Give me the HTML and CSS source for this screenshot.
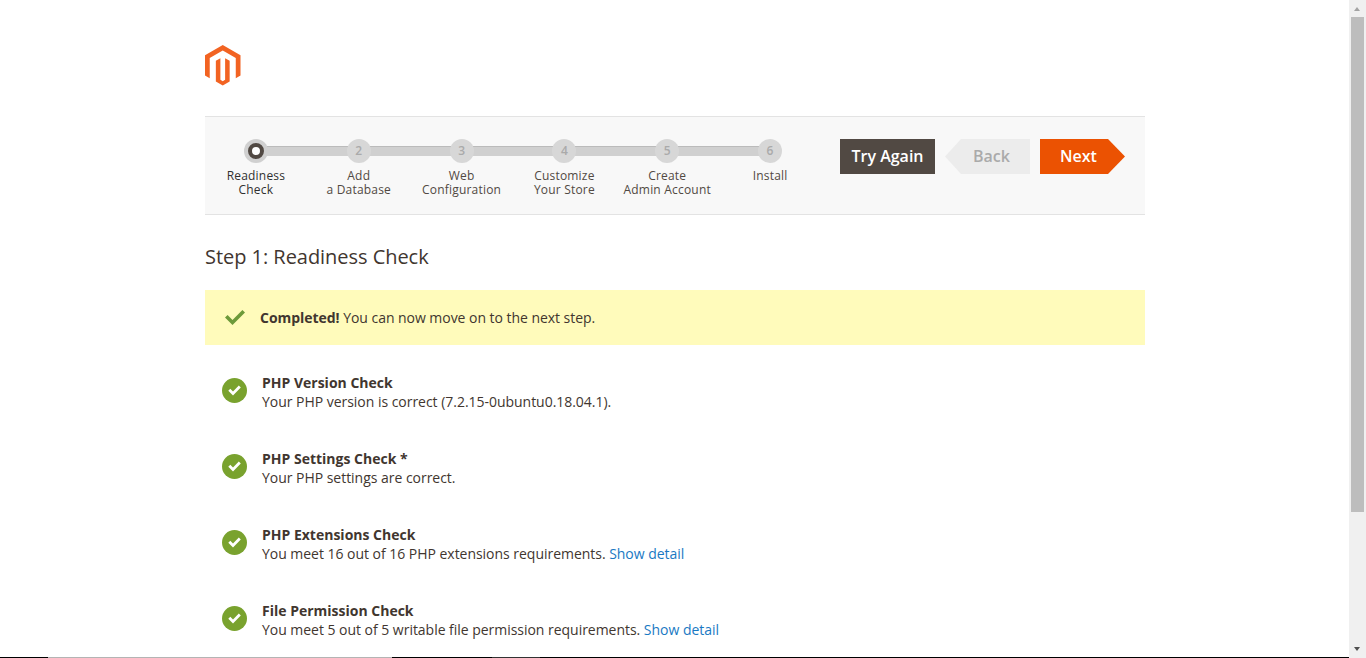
FILE: index.html
```html
<!DOCTYPE html>
<html lang="en">
<head>
<meta charset="utf-8">
<title>Magento Setup</title>
<link rel="stylesheet" href="styles.css">
</head>
<body>
<main class="page">
  <header class="logo-row">
    <svg class="logo" viewBox="0 0 36 41" preserveAspectRatio="none" aria-label="Magento"><path d="M18 0 36 10.3V30.8L31.2 33.6V13.2L18 5.6 4.8 13.2V33.6L0 30.8V10.3ZM20.4 13.4 25 16V37L18 41 11 37V16L15.6 13.4V35.3L18 36.7 20.4 35.3Z"/></svg>
  </header>
  <nav class="wizard">
    <ol class="steps">
      <li class="step step-active"><span class="dot"></span><span class="label">Readiness<br>Check</span></li>
      <li class="step"><span class="dot">2</span><span class="label">Add<br>a Database</span></li>
      <li class="step"><span class="dot">3</span><span class="label">Web<br>Configuration</span></li>
      <li class="step"><span class="dot">4</span><span class="label">Customize<br>Your Store</span></li>
      <li class="step"><span class="dot">5</span><span class="label">Create<br>Admin Account</span></li>
      <li class="step step-last"><span class="dot">6</span><span class="label">Install</span></li>
    </ol>
    <div class="actions">
      <button class="btn btn-dark">Try Again</button>
      <button class="btn btn-back">Back</button>
      <button class="btn btn-next">Next</button>
    </div>
  </nav>
  <h1 class="title">Step 1: Readiness Check</h1>
  <div class="notice">
    <svg class="notice-check" viewBox="0 0 20 15"><path d="M0 7.6 2.6 5 7.5 9.9 17.4 0 20 2.6 7.5 15Z"/></svg>
    <p><strong>Completed!</strong> You can now move on to the next step.</p>
  </div>
  <ul class="checks">
    <li class="check">
      <svg class="ok" viewBox="0 0 25 25"><circle cx="12.5" cy="12.5" r="12.5"/><path d="M6.3 12.7 8.3 10.7 11 13.4 16.8 7.6 18.8 9.6 11 17.4Z"/></svg>
      <div class="check-text"><h2>PHP Version Check</h2><p>Your PHP version is correct (7.2.15-0ubuntu0.18.04.1).</p></div>
    </li>
    <li class="check">
      <svg class="ok" viewBox="0 0 25 25"><circle cx="12.5" cy="12.5" r="12.5"/><path d="M6.3 12.7 8.3 10.7 11 13.4 16.8 7.6 18.8 9.6 11 17.4Z"/></svg>
      <div class="check-text"><h2>PHP Settings Check *</h2><p>Your PHP settings are correct.</p></div>
    </li>
    <li class="check">
      <svg class="ok" viewBox="0 0 25 25"><circle cx="12.5" cy="12.5" r="12.5"/><path d="M6.3 12.7 8.3 10.7 11 13.4 16.8 7.6 18.8 9.6 11 17.4Z"/></svg>
      <div class="check-text"><h2>PHP Extensions Check</h2><p>You meet 16 out of 16 PHP extensions requirements. <a href="#">Show detail</a></p></div>
    </li>
    <li class="check">
      <svg class="ok" viewBox="0 0 25 25"><circle cx="12.5" cy="12.5" r="12.5"/><path d="M6.3 12.7 8.3 10.7 11 13.4 16.8 7.6 18.8 9.6 11 17.4Z"/></svg>
      <div class="check-text"><h2>File Permission Check</h2><p>You meet 5 out of 5 writable file permission requirements. <a href="#">Show detail</a></p></div>
    </li>
  </ul>
</main>
<div class="scrollbar">
  <span class="arrow arrow-up"></span>
  <span class="thumb"></span>
  <span class="arrow arrow-down"></span>
</div>
<div class="edge">
  <span class="edge-a"></span><span class="edge-b"></span><span class="edge-c"></span><span class="edge-d"></span><span class="edge-e"></span>
</div>
</body>
</html>
```
FILE: styles.css
```css
*, *::before, *::after { box-sizing: border-box; }
html, body { height: 100%; }
body {
  margin: 0;
  overflow: hidden;
  background: #fff;
  color: #41362f;
  font: 14px/19px "Open Sans", "Liberation Sans", sans-serif;
}
.page { width: 940px; margin-left: 205px; }
.logo-row { height: 116px; padding-top: 45px; }
.logo { display: block; width: 35.5px; height: 40.5px; fill: #f26322; }

.wizard {
  height: 99px;
  display: flex;
  justify-content: space-between;
  background: #f8f8f8;
  border-top: 1px solid #e3e3e3;
  border-bottom: 1px solid #e3e3e3;
  padding: 22px 20px 0 0;
}
.steps {
  display: flex;
  list-style: none;
  margin: 0 0 0 -0.5px;
  padding: 0;
  width: 617px;
}
.step {
  position: relative;
  width: 103px;
  display: flex;
  flex-direction: column;
  align-items: center;
  text-align: center;
}
.step::before {
  content: "";
  position: absolute;
  top: 7px;
  left: 50%;
  width: 103px;
  height: 10px;
  background: #d0d0d0;
  border-top: 1px solid #bbb;
}
.step-last::before { display: none; }
.dot {
  position: relative;
  width: 24px;
  height: 24px;
  border-radius: 50%;
  background: #d7d7d7;
  color: #aaa;
  font-size: 12px;
  font-weight: 600;
  line-height: 24px;
}
.step-active .dot { background: #d0d0d0; }
.step-active .dot::after {
  content: "";
  position: absolute;
  left: 4px;
  top: 4px;
  width: 16px;
  height: 16px;
  border-radius: 50%;
  background: #fff;
  border: 4px solid #514943;
}
.label {
  margin-top: 6px;
  font-size: 12px;
  line-height: 14px;
  letter-spacing: 0.2px;
  white-space: nowrap;
  color: #514943;
}
.step-active .label { color: #303030; }

.actions { display: flex; gap: 10px; }
.btn {
  height: 35px;
  border: 0;
  padding: 0;
  font: 600 16px/35px "Open Sans", "Liberation Sans", sans-serif;
  color: #fff;
}
.btn-dark { width: 95px; background: #514943; }
.btn-back {
  width: 85px;
  background: #ececec;
  color: #aaa;
  padding-left: 8px;
  clip-path: polygon(16px 0, 100% 0, 100% 100%, 16px 100%, 0 50%);
}
.btn-next {
  width: 85px;
  background: #eb5202;
  padding-right: 8px;
  clip-path: polygon(0 0, 68px 0, 100% 50%, 68px 100%, 0 100%);
}

.title {
  margin: 28px 0 19px;
  font-size: 20px;
  font-weight: 400;
  line-height: 28px;
  letter-spacing: -0.04px;
}
.notice {
  height: 55px;
  display: flex;
  align-items: center;
  gap: 15px;
  padding-left: 20px;
  background: #fffbbb;
}
.notice p { margin: 0; letter-spacing: -0.04px; }
.notice-check { width: 20px; height: 15px; fill: #6d9a3a; }
.checks { list-style: none; margin: 24px 0 0; padding: 0; }
.check {
  display: flex;
  height: 76px;
  padding-left: 17px;
  gap: 15px;
}
.check-text { padding-top: 4px; }
.ok { flex: none; width: 25px; height: 25px; margin-top: 9px; }
.ok circle { fill: #79a22e; }
.ok path { fill: #fff; }
.check h2 { margin: 0; font-size: 14px; font-weight: 700; line-height: 19px; }
.check p { margin: 0; letter-spacing: -0.03px; }
.check a { color: #1979c3; text-decoration: none; }

.scrollbar {
  position: fixed;
  top: 0;
  right: 0;
  width: 17px;
  height: 658px;
  background: #f0f0f0;
}
.thumb {
  position: absolute;
  left: 2px;
  top: 17px;
  width: 13px;
  height: 495px;
  background: #bdbdbd;
}
.arrow {
  position: absolute;
  left: 5px;
  width: 0;
  height: 0;
  border-left: 3.5px solid transparent;
  border-right: 3.5px solid transparent;
}
.arrow-up { top: 7px; border-bottom: 4px solid #a3a3a3; }
.arrow-down { bottom: 7px; border-top: 4px solid #505050; }
.edge {
  position: fixed;
  left: 0;
  bottom: 0;
  width: 1349px;
  height: 1px;
  display: flex;
}
.edge span { height: 1px; }
.edge-a { width: 48px; background: #000; }
.edge-b { width: 344px; background: #b4b4b4; }
.edge-c { width: 100px; background: #000; }
.edge-d { width: 48px; background: #333; }
.edge-e { flex: 1; background: #000; }
```
